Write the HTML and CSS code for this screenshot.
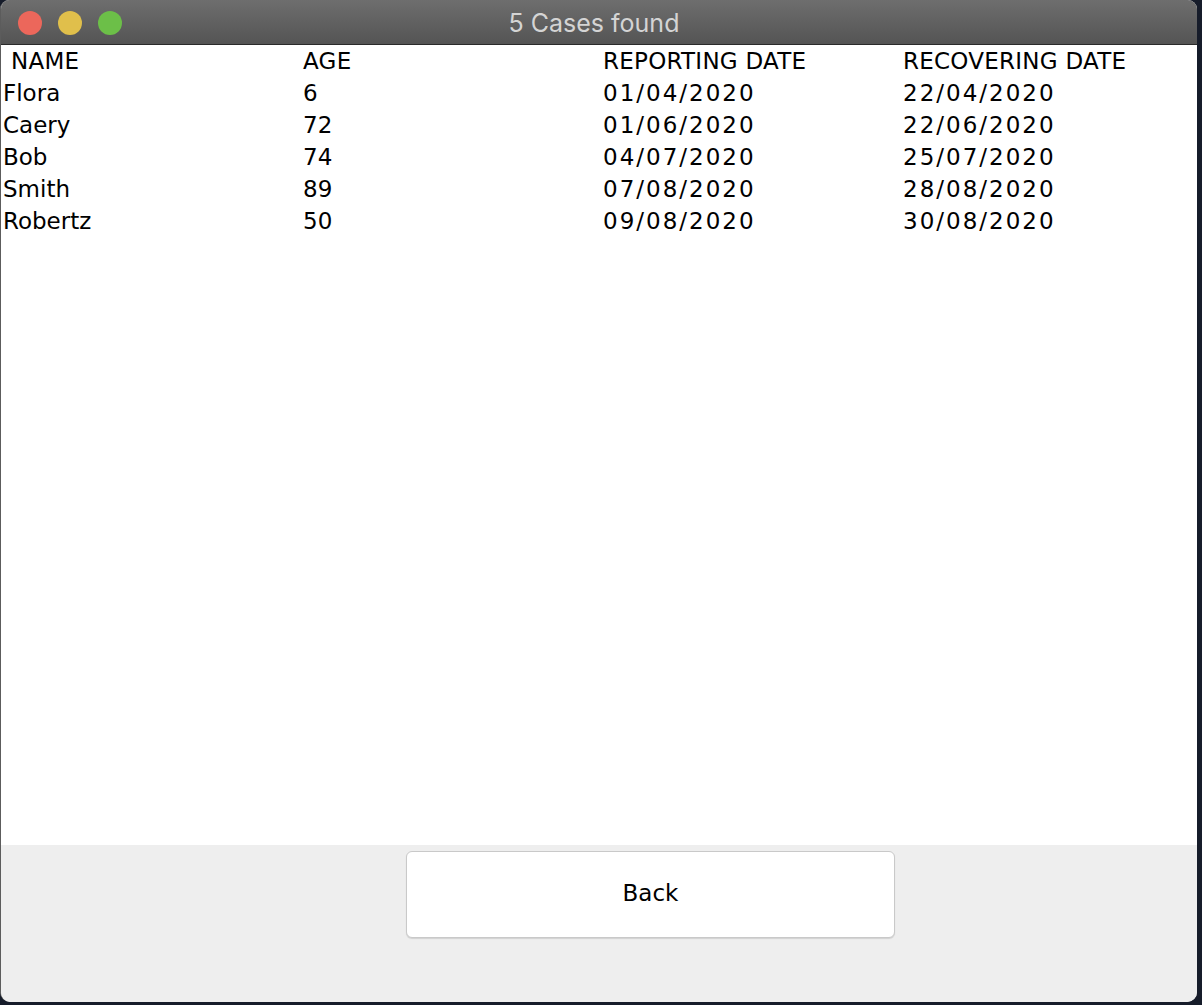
FILE: index.html
```html
<!DOCTYPE html>
<html>
<head>
<meta charset="utf-8">
<link rel="stylesheet" href="styles.css">
</head>
<body>
<div class="window">
  <div class="titlebar">
    <div class="lights">
      <span class="light red"></span>
      <span class="light yellow"></span>
      <span class="light green"></span>
    </div>
    <div class="title">5 Cases found</div>
  </div>
  <div class="content">
    <div class="row head">
      <div class="cell first">NAME</div>
      <div class="cell">AGE</div>
      <div class="cell">REPORTING DATE</div>
      <div class="cell">RECOVERING DATE</div>
    </div>
    <div class="row">
      <div class="cell">Flora</div>
      <div class="cell">6</div>
      <div class="cell date">01/04/2020</div>
      <div class="cell date">22/04/2020</div>
    </div>
    <div class="row">
      <div class="cell">Caery</div>
      <div class="cell">72</div>
      <div class="cell date">01/06/2020</div>
      <div class="cell date">22/06/2020</div>
    </div>
    <div class="row">
      <div class="cell">Bob</div>
      <div class="cell">74</div>
      <div class="cell date">04/07/2020</div>
      <div class="cell date">25/07/2020</div>
    </div>
    <div class="row">
      <div class="cell">Smith</div>
      <div class="cell">89</div>
      <div class="cell date">07/08/2020</div>
      <div class="cell date">28/08/2020</div>
    </div>
    <div class="row">
      <div class="cell">Robertz</div>
      <div class="cell">50</div>
      <div class="cell date">09/08/2020</div>
      <div class="cell date">30/08/2020</div>
    </div>
  </div>
  <div class="footer">
    <button class="back">Back</button>
  </div>
</div>
</body>
</html>
```

FILE: styles.css
```css
html, body {
  margin: 0;
  padding: 0;
  background: #161c2a;
  width: 1202px;
  height: 1005px;
  overflow: hidden;
}
.window {
  width: 1197px;
  height: 1002px;
  border-radius: 9px 9px 10px 10px;
  overflow: hidden;
  display: flex;
  flex-direction: column;
  background: #eeeeee;
  box-sizing: border-box;
  border-left: 1px solid #5c5c5c;
}
.titlebar {
  height: 44px;
  flex: none;
  background: linear-gradient(#6e6e6e, #545454);
  border-bottom: 1px solid #2a2a2a;
  border-top: 1px solid #8a8a8a;
  box-sizing: content-box;
  position: relative;
  display: flex;
  align-items: center;
  justify-content: center;
  margin-top: -1px;
}
.lights {
  position: absolute;
  left: 17px;
  top: 11px;
  display: flex;
  gap: 16px;
}
.light {
  width: 24px;
  height: 24px;
  border-radius: 50%;
  display: block;
}
.red { background: #ec675b; }
.yellow { background: #e0bf4b; }
.green { background: #6cbf48; }
.title {
  font-family: "Inter", "Liberation Sans", sans-serif;
  font-size: 25px;
  color: #d4d4d4;
  margin-left: -10px;
  margin-top: 2px;
}
.content {
  flex: 1;
  background: #ffffff;
  padding: 0 0 0 1px;
}
.row {
  display: grid;
  grid-template-columns: 300px 300px 300px 300px;
  height: 32px;
  padding-bottom: 2px;
  margin-bottom: -2px;
  align-items: center;
}
.cell {
  font-family: "DejaVu Sans", sans-serif;
  font-size: 23px;
  color: #000;
  padding-left: 1px;
  white-space: nowrap;
}
.head .cell { letter-spacing: 0.25px; }
.cell.first { padding-left: 9px; }
.cell.date { letter-spacing: 2px; }
.footer {
  height: 157px;
  flex: none;
  background: #eeeeee;
  display: flex;
  justify-content: flex-start;
  align-items: flex-start;
  padding: 6px 0 0 405px;
  box-sizing: border-box;
}
.back {
  width: 489px;
  height: 87px;
  background: #ffffff;
  border: 1px solid #c9c9c9;
  border-radius: 6px;
  box-shadow: 0 1px 1px rgba(0,0,0,0.12);
  font-family: "DejaVu Sans", sans-serif;
  font-size: 23px;
  color: #000;
  padding: 0 0 3px 0;
}
```
